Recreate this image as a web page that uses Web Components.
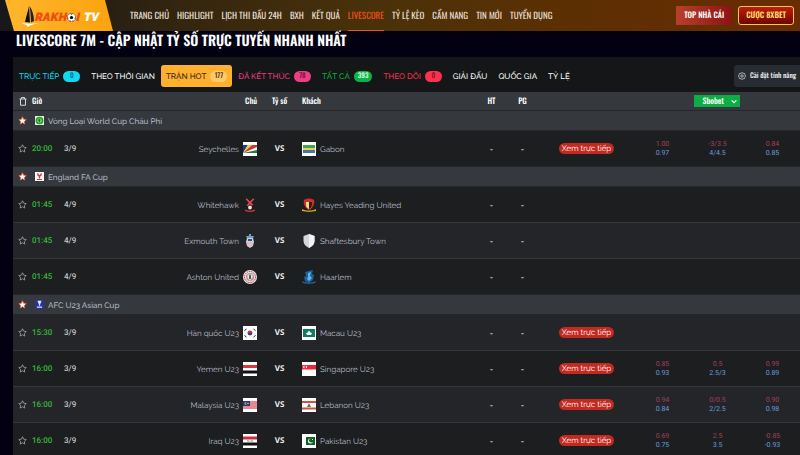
<!DOCTYPE html>
<html lang="vi">
<head>
<meta charset="utf-8">
<meta name="viewport" content="width=device-width, initial-scale=1">
<title>Livescore 7M - Rakhoi TV</title>
<style>
  body {
    margin: 0;
    background: #020011;
    color: #fff;
    font-family: Raleway, "Open Sans", sans-serif;
    font-size: 8px;
    text-rendering: geometricPrecision;
    overflow: hidden;
  }
</style>
</head>
<body>
<site-header></site-header>
<score-board heading="LIVESCORE 7M - CẬP NHẬT TỶ SỐ TRỰC TUYẾN NHANH NHẤT">
  <filter-bar slot="filters"></filter-bar>
  <match-table></match-table>
</score-board>

<script>
class SiteLogo extends HTMLElement {
  constructor() {
    super();
    this.attachShadow({ mode: 'open' });
    this.shadowRoot.innerHTML = `
      <style>
        :host { display: block; width: 115px; height: 31px; }
        a {
          display: flex;
          align-items: center;
          height: 31px;
          margin-left: 5px;
          padding-left: 16px;
          box-sizing: border-box;
          width: 109px;
          background: linear-gradient(90deg, #ffb62c, #fba20e);
          clip-path: polygon(0 0, 100px 0, 108px 100%, 9px 100%);
          text-decoration: none;
          font: italic 900 12px/31px Raleway, sans-serif;
          color: #f04e12;
        }
        .boat { width: 20px; height: 22px; margin-right: -6px; flex: none; }
        .ball { width: 9px; height: 9px; flex: none; }
        .word { padding-top: 3px; display: flex; align-items: center; }
        .tv { color: #fff; margin-left: 4px; }
      </style>
      <a href="#" aria-label="Rakhoi TV">
        <svg class="boat" viewBox="0 0 20 22">
          <path d="M8 1C7 6 5 12 4 17l5 .5C8.500 12 8.500 6 8 1z" fill="#111"/>
          <path d="M8.500 1c3 4 4.500 10 4.500 15l-3 1.500C9.800 12 9.500 6 8.500 1z" fill="#222"/>
          <path d="M0 17.500c5 1.500 11 1.500 19 .5-5 1-10 1.500-12 4-1-2.500-4-2.500-7-4.500z" fill="#fff"/>
        </svg>
        <span class="word">RAKH<svg class="ball" viewBox="0 0 10 10">
          <circle cx="5" cy="5" r="4.700" fill="#fff" stroke="#222" stroke-width=".5"/>
          <path d="M5 3l2 1.500-.7 2.200H3.700L3 4.500zM3.500.8h3L5 2zM.6 4l1 2-.6 1zM9.400 4l-1 2 .6 1zM3 8l1.500 1L3 9.200zM7 8L5.500 9l1.500.2z" fill="#111"/>
        </svg>I<span class="tv">TV</span></span>
      </a>
    `;
  }
}
customElements.define('site-logo', SiteLogo);

class SiteHeader extends HTMLElement {
  constructor() {
    super();
    this.attachShadow({ mode: 'open' });
    this.shadowRoot.innerHTML = `
      <style>
        :host {
          display: flex;
          align-items: center;
          height: 31px;
          background: linear-gradient(90deg, #17171c 0, #33250f 22%, #48310a 45%, #5a3003 68%, #6a2c02 100%);
          font-family: Oswald, "Roboto Condensed", sans-serif;
        }
        nav {
          display: flex;
          gap: 8px;
          margin-left: 15px;
          flex: 1;
          white-space: nowrap;
        }
        nav a {
          color: #e6dfd2;
          text-decoration: none;
          font-size: 9px;
          line-height: 29px;
          padding-top: 1px;
          border-bottom: 1px solid transparent;
        }
        nav a.active { color: #f0501e; border-bottom-color: #e8552b; }
        .promo { display: flex; gap: 6px; margin-right: 6px; }
        .promo a {
          box-sizing: border-box;
          height: 19px;
          line-height: 19px;
          font-size: 8px;
          font-weight: 500;
          color: #fff;
          text-decoration: none;
          padding: 0 8px;
          background: linear-gradient(90deg, #b8402a, #8c1313);
          white-space: nowrap;
        }
        .promo a.bet {
          padding: 0 7px;
          line-height: 17px;
          font-weight: 600;
          color: #ffd964;
          border: 1px solid #ffc54a;
          border-radius: 3px;
          background: linear-gradient(#c01a0e, #6d0704);
        }
      </style>
      <site-logo></site-logo>
      <nav>${this.getLinks().map(text => `
        <a href="#" class="${text === 'LIVESCORE' ? 'active' : ''}">${text}</a>`).join('')}
      </nav>
      <div class="promo">
        <a href="#">TOP NHÀ CÁI</a>
        <a href="#" class="bet">CƯỢC 8XBET</a>
      </div>
    `;
  }

  getLinks() {
    return ['TRANG CHỦ', 'HIGHLIGHT', 'LỊCH THI ĐẤU 24H', 'BXH', 'KẾT QUẢ', 'LIVESCORE',
      'TỶ LỆ KÈO', 'CẨM NANG', 'TIN MỚI', 'TUYỂN DỤNG'];
  }
}
customElements.define('site-header', SiteHeader);

class ScoreBoard extends HTMLElement {
  constructor() {
    super();
    this.attachShadow({ mode: 'open' });
    this.shadowRoot.innerHTML = `
      <style>
        :host { display: block; margin-left: 13px; }
        h1 {
          margin: 0;
          padding: 1px 3px 7px;
          font: 600 14px/18px Oswald, "Roboto Condensed", sans-serif;
          white-space: nowrap;
        }
        section { background: #141617; }
      </style>
      <h1>${this.getAttribute('heading')}</h1>
      <section>
        <slot name="filters"></slot>
        <slot></slot>
      </section>
    `;
  }
}
customElements.define('score-board', ScoreBoard);

class FilterBar extends HTMLElement {
  constructor() {
    super();
    this.attachShadow({ mode: 'open' });
    this.shadowRoot.innerHTML = `
      <style>
        :host {
          display: flex;
          align-items: center;
          height: 35px;
          padding: 3px 0 0 1px;
          box-sizing: border-box;
          white-space: nowrap;
        }
        button {
          display: flex;
          align-items: center;
          gap: 4px;
          height: 22px;
          padding: 0 5px;
          border: 0;
          border-radius: 3px;
          background: none;
          font: 500 8px/12px Raleway, "Open Sans", sans-serif;
          text-rendering: inherit;
          color: var(--tone, #fff);
        }
        .tab + .tab { margin-left: 1px; }
        .tab.active { background: #ffb02e; color: #2d2412; }
        .badge {
          min-width: 17px;
          box-sizing: border-box;
          padding: 0 4px;
          border-radius: 6px;
          background: var(--tone);
          color: var(--ink);
          font: 500 7px/11px Oswald, sans-serif;
          text-align: center;
        }
        .tab.active .badge { background: #ffc968; }
        .settings {
          margin-left: auto;
          padding: 0 4px;
          border-radius: 3px 0 0 3px;
          background: #272c33;
          font: 500 7px/12px Oswald, sans-serif;
          color: #e8e8e8;
        }
        .settings svg { width: 8px; height: 8px; }
      </style>
      ${this.getTabs().map(tab => `
        <button class="tab ${tab.active ? 'active' : ''}" style="${tab.tone ? `--tone:${tab.tone};--ink:${tab.ink}` : ''}">
          <span>${tab.text}</span>${tab.count ? `<span class="badge">${tab.count}</span>` : ''}
        </button>`).join('')}
      <button class="settings">
        <svg viewBox="0 0 16 16" fill="none" stroke="#d5d8dc" stroke-width="1.500">
          <path d="M8 1l2 1.500 3 .3.800 2.700L15 8l-1.200 2.500-.8 2.700-3 .3L8 15l-2-1.500-3-.3-.8-2.700L1 8l1.200-2.500L3 2.800l3-.3z"/>
          <circle cx="8" cy="8" r="2.500"/>
        </svg>
        <span>Cài đặt tính năng</span>
      </button>
    `;
  }

  getTabs() {
    return [
      { text: 'TRỰC TIẾP', count: '0', tone: '#12d8ee', ink: '#0b6a80' },
      { text: 'THEO THỜI GIAN' },
      { text: 'TRẬN HOT', count: '177', tone: '#ffb02e', ink: '#4d3b1d', active: true },
      { text: 'ĐÃ KẾT THÚC', count: '78', tone: '#ec3f83', ink: '#6e1038' },
      { text: 'TẤT CẢ', count: '393', tone: '#0fb244', ink: '#d8ffe2' },
      { text: 'THEO DÕI', count: '0', tone: '#fb3150', ink: '#8c0d22' },
      { text: 'GIẢI ĐẤU' },
      { text: 'QUỐC GIA' },
      { text: 'TỶ LỆ' }
    ];
  }
}
customElements.define('filter-bar', FilterBar);

// flags are drawn on a white 14x14 tile, club crests straight on the row
const flag = art => `<path d="M0 0h14v14H0z" fill="#fff"/>${art}`;
const CRESTS = {
  seychelles: flag(`<path d="M0 3h5L0 11z" fill="#17458f"/><path d="M5 3h4L0 11z" fill="#f6ce3a"/>
    <path d="M9 3h5v2L0 11z" fill="#d8352e"/><path d="M14 8v3H0z" fill="#1c7f45"/>`),
  gabon: flag(`<path d="M1 3h12v3H1z" fill="#3ba457"/><path d="M1 6h12v2H1z" fill="#f3d238"/><path d="M1 8h12v3H1z" fill="#3f74bd"/>`),
  korea: flag(`<path d="M4.500 7a2.500 2.500 0 0 1 5 0z" fill="#d3293f"/><path d="M4.500 7a2.500 2.500 0 0 0 5 0z" fill="#29439b"/>
    <path d="M1.500 4.500l2-1.500M10.500 3l2 1.500M1.500 9.500l2 1.500M10.500 11l2-1.500" stroke="#222"/>`),
  macau: flag(`<path d="M1 3h12v8H1z" fill="#0d7c60"/><path d="M7 4.500l1.300 2L10 7 9 9H5L4 7l1.700-.5z" fill="#fff"/>`),
  yemen: flag(`<path d="M0 3h14v3H0z" fill="#df3636"/><path d="M0 8.500h14v3H0z" fill="#111"/>`),
  singapore: flag(`<path d="M0 3h14v4.500H0z" fill="#ee2738"/><circle cx="2.500" cy="5" r="1.300" fill="#fff"/><circle cx="3.100" cy="5" r="1" fill="#ee2738"/>
    <path d="M4 4h1v2H4z" fill="#fff"/>`),
  malaysia: flag(`<path d="M0 4h14M0 6h14M0 8h14M0 10h14" stroke="#e2606a" stroke-width="1.400"/><path d="M0 3h7v5H0z" fill="#27367c"/>
    <circle cx="2.800" cy="5.500" r="1.200" fill="#e9cf64"/><circle cx="3.400" cy="5.500" r="1" fill="#27367c"/><circle cx="5" cy="5.500" r=".8" fill="#e9cf64"/>`),
  lebanon: flag(`<path d="M0 3h14v2H0zM0 9.500h14v2H0z" fill="#dd4c40"/><path d="M7 5l2 4H5z" fill="#2f9150"/>`),
  iraq: flag(`<path d="M0 2.500h14v3H0z" fill="#cf2d3c"/><path d="M0 8.500h14v3H0z" fill="#111"/><path d="M4 7h2M6.500 7h1M8 7h2" stroke="#5c9c6c"/>`),
  pakistan: flag(`<path d="M4 3h9v8H4z" fill="#0c6125"/><circle cx="8.500" cy="7" r="2.500" fill="#fff"/><circle cx="9.300" cy="6.400" r="2.200" fill="#0c6125"/>
    <path d="M10 5h1v1h-1z" fill="#fff"/>`),
  whitehawk: `<path d="M2.500 1l1.500-.5 3 3 3-3 1.500.5-3.300 3.800L10.500 7l-2 .5L7 6l-2 2-1.500-.5 2.300-2.700z" fill="#e04a52"/>
    <circle cx="7" cy="9.500" r="1.900" fill="#f4dede"/><path d="M2 11.500c3 1.500 7 1.500 10 0v1.500c-3 1.300-7 1.300-10 0z" fill="#c9353f"/>`,
  exmouth: `<path d="M6 0h2v2h3l-1 2H4L3 2h3z" fill="#6fa2c6"/><path d="M4 4h6l1 4-1 4-3 2-3-2-1-4z" fill="#c8d2e4"/>
    <path d="M4 8h6v3l-3 2-3-2z" fill="#e6bcc4"/><path d="M5 5h4v2H5z" fill="#34527f"/>`,
  ashton: `<circle cx="7" cy="7" r="7" fill="#efe5e5"/><circle cx="7" cy="7" r="5.500" fill="none" stroke="#b2394a" stroke-dasharray="1.500 .7"/>
    <circle cx="7" cy="7" r="4" fill="#c58790"/><path d="M4.500 4.500h5v3L7 10.500 4.500 8z" fill="#e5e8e3"/><path d="M6 5h2v4H6z" fill="#3c6b55"/>`,
  hayes: `<path d="M2 2c3-2 7-2 10 0 1 4-1 8-5 10C3 10 1 6 2 2z" fill="#c9302c"/><path d="M4 4h6v3c0 2-1 3-3 4-2-1-3-2-3-4z" fill="#f6d77a"/>
    <path d="M7 4h3v3c0 2-1 3-3 4z" fill="#3b1817"/><path d="M0 11c4 2 10 2 14 0v2c-4 1-10 1-14 0z" fill="#e2a52c"/>`,
  shaftesbury: `<path d="M7 0l5.500 2v5c0 3-2 5-5.500 7C3.500 12 1.500 10 1.500 7V2z" fill="#d4d7d8"/><path d="M7 0l5.500 2v5c0 3-2 5-5.500 7z" fill="#f2f4f4"/>`,
  haarlem: `<path d="M3 2l4-1 4-1-1 4 2 1-1 5-4 3-4-2-1-4 2-1z" fill="#1d5f9d"/><path d="M6 3l3-1-1 4 2 2-3 3-2-2 1-2z" fill="#5cb4e0"/>
    <path d="M0 11c4 2 10 2 14 0l-1 2c-4 1-8 1-12 0z" fill="#2a6da6"/>`,
  caf: `<path d="M0 0h14v14H0z" fill="#dff3dc"/><circle cx="7" cy="7" r="6" fill="#1f9c3d"/><circle cx="7" cy="7" r="3.500" fill="#a5d94b"/><path d="M6 4l3 2-2 4-2-3z" fill="#17742d"/>`,
  facup: `<path d="M0 0h14v14H0z" fill="#fff"/><path d="M3 2l2 .5L7 5l2-2.500 2-.5-1 4-2 1v3H6V7L4 6zM3 11h8v1.500H3z" fill="#d9303d"/>`,
  afc: `<path d="M0 0h14v14H0z" fill="#26349a"/><path d="M4 1h6L9 5 8 6v3H6V6L5 5zM3 10h8v2H3z" fill="#dfe4f7"/>`
};

class TeamCrest extends HTMLElement {
  constructor() {
    super();
    this.attachShadow({ mode: 'open' });
  }

  connectedCallback() {
    this.shadowRoot.innerHTML = `
      <style>
        :host { display: block; width: 14px; height: 14px; flex: none; }
        svg { display: block; width: 100%; height: 100%; }
      </style>
      <svg viewBox="0 0 14 14" aria-hidden="true">${CRESTS[this.getAttribute('name')]}</svg>
    `;
  }
}
customElements.define('team-crest', TeamCrest);

class StarToggle extends HTMLElement {
  constructor() {
    super();
    this.attachShadow({ mode: 'open' });
  }

  connectedCallback() {
    const on = this.hasAttribute('on');
    this.shadowRoot.innerHTML = `
      <style>
        :host { display: block; }
        button { display: block; margin: 0 auto; padding: 0; border: 0; background: none; width: 9px; height: 9px; }
        svg { display: block; }
      </style>
      <button aria-label="Theo dõi" aria-pressed="${on}">
        <svg width="9" height="9" viewBox="0 0 18 18">
          <path d="M9 1.500l2.300 4.900 5.200.7-3.800 3.700.9 5.300L9 13.500l-4.600 2.600.9-5.300L1.500 7.100l5.200-.7z"
            fill="${on ? '#fff' : 'none'}" stroke="${on ? '#e2603c' : '#a5a9ad'}" stroke-width="1.600"/>
        </svg>
      </button>
    `;
  }
}
customElements.define('star-toggle', StarToggle);

class MatchTable extends HTMLElement {
  constructor() {
    super();
    this.attachShadow({ mode: 'open' });
    this.shadowRoot.innerHTML = `
      <style>
        :host { display: block; }
        table { width: 100%; border-collapse: collapse; table-layout: fixed; }
        th, td { padding: 0; text-align: center; font-weight: 500; white-space: nowrap; }
        .star { width: 19px; }
        .time { width: 32px; }
        .date { width: 31px; }
        .home { width: 162px; }
        .vs { width: 45px; }
        .half { width: 31px; }
        .live { width: 97px; }
        .odds { width: 55px; }
        th {
          height: 18px;
          background: #35383d;
          font: 500 8px/12px Oswald, sans-serif;
        }
        th svg { display: block; margin: 0 auto; width: 8px; height: 9px; }
        .left { text-align: left; }
        .right { text-align: right; }
        .league td {
          height: 19px;
          background: #35383d;
          border-top: 1px solid #25272a;
          color: #b4b9c2;
        }
        .league div, .team { display: flex; align-items: center; }
        .league div { gap: 4px; padding-left: 3px; }
        .league team-crest { width: 9px; height: 9px; }
        .match td {
          height: 35px;
          background: #1c1e20;
          border-top: 1px solid #34373b;
        }
        .match.alt td { background: #232528; }
        .league + .match td { border-top-color: #25272a; }
        .team { gap: 4px; color: #b8bdc7; font-weight: 400; }
        .team.home-side { justify-content: flex-end; }
        .match .clock { color: #37b83a; font: 500 8px/12px Roboto, sans-serif; text-align: left; }
        .match .day { color: #c5c8cc; font: 500 8px/12px Roboto, sans-serif; text-align: left; }
        .match .versus { font: 700 8px/12px "Open Sans", sans-serif; color: #f0f0f0; }
        .watch {
          display: inline-block;
          height: 11px;
          padding: 0 3px;
          border-radius: 6px;
          background: #c4291f;
          color: #fff;
          font: 400 8px/11px Raleway, "Open Sans", sans-serif;
          text-decoration: none;
          vertical-align: middle;
        }
        .price { font: 400 7px/9px Roboto, sans-serif; }
        .price span { display: block; color: #a3405f; }
        .price span + span { color: #6c9bdc; }
        label { position: relative; display: inline-block; vertical-align: middle; }
        select {
          appearance: none;
          display: block;
          width: 46px;
          height: 12px;
          padding: 0 8px;
          border: 0;
          border-radius: 0;
          background: #0bae43;
          color: #fff;
          font: 500 8px/12px Oswald, sans-serif;
          text-rendering: inherit;
        }
        label svg { position: absolute; right: 3px; top: 4px; width: 6px; height: 5px; pointer-events: none; }
      </style>
      <table>
        <colgroup>
          <col class="star"><col class="time"><col class="date"><col class="home"><col class="vs">
          <col><col class="half"><col class="half"><col class="live">
          <col class="odds"><col class="odds"><col class="odds">
        </colgroup>
        <thead>
          <tr>
            <th>
              <svg viewBox="0 0 16 18" fill="none" stroke="#e4e6e8" stroke-width="1.800"><path d="M1 4h14M5 4V1h6v3M3 4v12.500h10V4"/></svg>
            </th>
            <th class="left">Giờ</th>
            <th></th>
            <th class="right">Chủ</th>
            <th>Tỷ số</th>
            <th class="left">Khách</th>
            <th>HT</th>
            <th>PG</th>
            <th></th>
            <th colspan="3">
              <label>
                <select aria-label="Nhà cái"><option>Sbobet</option></select>
                <svg viewBox="0 0 10 8" fill="none" stroke="#fff" stroke-width="2"><path d="M1 2l4 4 4-4"/></svg>
              </label>
            </th>
          </tr>
        </thead>
        <tbody>${this.getGroups().map(group => this.renderGroup(group)).join('')}</tbody>
      </table>
    `;
  }

  renderGroup(group) {
    return `
      <tr class="league">
        <td><star-toggle on></star-toggle></td>
        <td colspan="11"><div><team-crest name="${group.crest}"></team-crest><span>${group.name}</span></div></td>
      </tr>
      ${group.matches.map(match => this.renderMatch(match)).join('')}
    `;
  }

  renderMatch(match) {
    const odds = match.odds || [[], [], []];
    return `
      <tr class="match ${match.alt ? 'alt' : ''}">
        <td><star-toggle></star-toggle></td>
        <td class="clock">${match.time}</td>
        <td class="day">${match.date}</td>
        <td><div class="team home-side"><span>${match.home[0]}</span><team-crest name="${match.home[1]}"></team-crest></div></td>
        <td class="versus">VS</td>
        <td><div class="team"><team-crest name="${match.away[1]}"></team-crest><span>${match.away[0]}</span></div></td>
        <td>-</td>
        <td>-</td>
        <td>${match.live ? '<a class="watch" href="#">Xem trực tiếp</a>' : ''}</td>
        ${odds.map(pair => `<td class="price">${pair.map(n => `<span>${n}</span>`).join('')}</td>`).join('')}
      </tr>
    `;
  }

  getGroups() {
    return [
      {
        name: 'Vòng Loại World Cup Châu Phi',
        crest: 'caf',
        matches: [
          { time: '20:00', date: '3/9', home: ['Seychelles', 'seychelles'], away: ['Gabon', 'gabon'], live: true,
            odds: [['1.00', '0.97'], ['-3/3.5', '4/4.5'], ['0.84', '0.85']] }
        ]
      },
      {
        name: 'England FA Cup',
        crest: 'facup',
        matches: [
          { time: '01:45', date: '4/9', home: ['Whitehawk', 'whitehawk'], away: ['Hayes Yeading United', 'hayes'] },
          { time: '01:45', date: '4/9', home: ['Exmouth Town', 'exmouth'], away: ['Shaftesbury Town', 'shaftesbury'], alt: true },
          { time: '01:45', date: '4/9', home: ['Ashton United', 'ashton'], away: ['Haarlem', 'haarlem'] }
        ]
      },
      {
        name: 'AFC U23 Asian Cup',
        crest: 'afc',
        matches: [
          { time: '15:30', date: '3/9', home: ['Hàn quốc U23', 'korea'], away: ['Macau U23', 'macau'], live: true, alt: true },
          { time: '16:00', date: '3/9', home: ['Yemen U23', 'yemen'], away: ['Singapore U23', 'singapore'], live: true,
            odds: [['0.85', '0.93'], ['0.5', '2.5/3'], ['0.99', '0.89']] },
          { time: '16:00', date: '3/9', home: ['Malaysia U23', 'malaysia'], away: ['Lebanon U23', 'lebanon'], live: true, alt: true,
            odds: [['0.94', '0.84'], ['0/0.5', '2/2.5'], ['0.90', '0.98']] },
          { time: '16:00', date: '3/9', home: ['Iraq U23', 'iraq'], away: ['Pakistan U23', 'pakistan'], live: true,
            odds: [['0.69', '0.75'], ['2.5', '3.5'], ['-0.85', '-0.93']] }
        ]
      }
    ];
  }
}
customElements.define('match-table', MatchTable);
</script>
</body>
</html>
